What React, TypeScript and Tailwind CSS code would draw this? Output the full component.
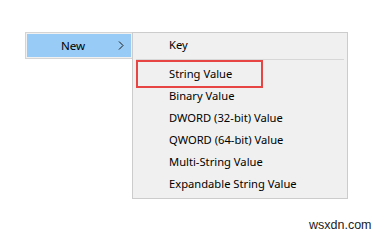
import React from "react";

const items = [
  "String Value",
  "Binary Value",
  "DWORD (32-bit) Value",
  "QWORD (64-bit) Value",
  "Multi-String Value",
  "Expandable String Value",
];

export default function App() {
  return (
    <div
      className="relative h-[235px] w-[382px] overflow-hidden bg-white text-[11.2px] text-black"
      style={{ fontFamily: '"Noto Sans", "Open Sans", sans-serif' }}
    >
      <div className="flex items-start pl-[25px] pt-[32px]">
        {/* parent menu */}
        <div className="h-[27px] w-[108px] border border-[#d4d4d4] bg-[#f0f0f0] p-px">
          <div className="flex h-full items-center bg-[#99cbf7] pl-[34px] pr-[7px]">
            <span className="flex-1 text-[11.6px]">New</span>
            <svg width="6" height="9" viewBox="0 0 6 9" className="text-[#1a1a1a]">
              <path d="M1 0.5 L5 4.5 L1 8.5" fill="none" stroke="currentColor" strokeWidth="1" />
            </svg>
          </div>
        </div>

        {/* submenu */}
        <div className="-ml-px h-[167px] w-[216px] border border-[#cccccc] bg-[#f0f0f0] py-px">
          <div className="flex h-[22px] items-center pl-[36px]">Key</div>
          <div className="mx-[3px] my-[3px] h-px bg-[#d7d7d7]" />
          {items.map((label, i) => (
            <div key={label} className="relative flex h-[22px] items-center pl-[36px]">
              {label}
              {i === 0 && (
                <div className="absolute left-[3px] top-[-3px] h-[28px] w-[127px] border-[2.5px] border-[#e74444]" />
              )}
            </div>
          ))}
        </div>
      </div>

      <div
        className="absolute left-[309px] top-[216px] text-[12.5px] text-[#222]"
        style={{ fontFamily: '"Liberation Sans", Arial, sans-serif' }}
      >
        wsxdn.com
      </div>
    </div>
  );
}
